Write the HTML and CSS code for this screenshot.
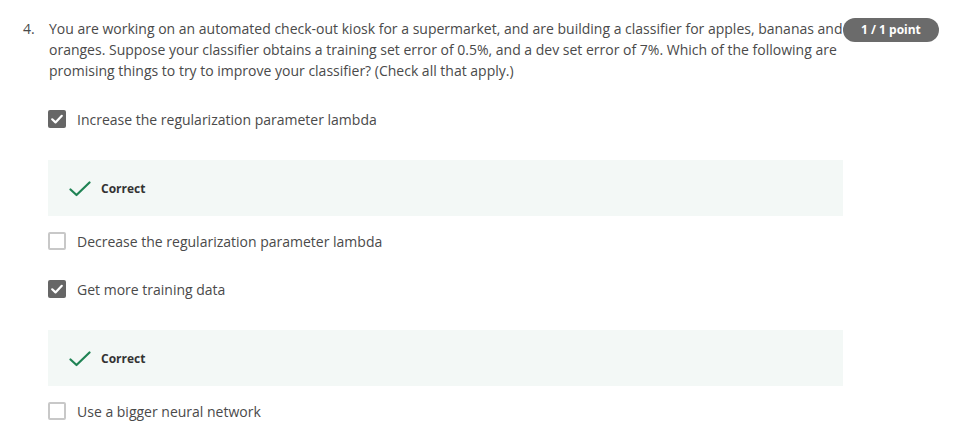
FILE: index.html
```html
<!DOCTYPE html>
<html>
<head>
<meta charset="utf-8">
<link rel="stylesheet" href="styles.css">
</head>
<body>
<div class="question">
  <div class="q-head">
    <div class="q-num">4.</div>
    <div class="q-text">You are working on an automated check-out kiosk for a supermarket, and are building a classifier for apples, bananas and oranges. Suppose your classifier obtains a training set error of 0.5%, and a dev set error of 7%. Which of the following are promising things to try to improve your classifier? (Check all that apply.)</div>
    <div class="badge">1 / 1 point</div>
  </div>
  <div class="options">
    <div class="option first">
      <div class="row">
        <span class="box checked"><svg width="18" height="18" viewBox="0 0 18 18"><path d="M4.2 9.3 L7.5 12.4 L13.8 5.8" fill="none" stroke="#fff" stroke-width="2.2" stroke-linecap="round" stroke-linejoin="round"/></svg></span>
        <span class="label">Increase the regularization parameter lambda</span>
      </div>
      <div class="feedback">
        <svg class="tick" width="22" height="16" viewBox="0 0 22 16"><path d="M1.5 8.5 L7.5 14 L20.5 1.5" fill="none" stroke="#1f8354" stroke-width="2.2" stroke-linecap="round" stroke-linejoin="round"/></svg>
        <span class="fb-text">Correct</span>
      </div>
    </div>
    <div class="option after-fb">
      <div class="row">
        <span class="box"></span>
        <span class="label">Decrease the regularization parameter lambda</span>
      </div>
    </div>
    <div class="option">
      <div class="row">
        <span class="box checked"><svg width="18" height="18" viewBox="0 0 18 18"><path d="M4.2 9.3 L7.5 12.4 L13.8 5.8" fill="none" stroke="#fff" stroke-width="2.2" stroke-linecap="round" stroke-linejoin="round"/></svg></span>
        <span class="label">Get more training data</span>
      </div>
      <div class="feedback">
        <svg class="tick" width="22" height="16" viewBox="0 0 22 16"><path d="M1.5 8.5 L7.5 14 L20.5 1.5" fill="none" stroke="#1f8354" stroke-width="2.2" stroke-linecap="round" stroke-linejoin="round"/></svg>
        <span class="fb-text">Correct</span>
      </div>
    </div>
    <div class="option after-fb">
      <div class="row">
        <span class="box"></span>
        <span class="label">Use a bigger neural network</span>
      </div>
    </div>
  </div>
</div>
</body>
</html>
```

FILE: styles.css
```css
html, body {
  margin: 0;
  padding: 0;
  background: #fff;
}
body {
  font-family: "Open Sans", "Liberation Sans", sans-serif;
  color: #4a4a4a;
  font-size: 14px;
  line-height: 21px;
}
.question {
  padding: 18px 0 0 23px;
  width: 916px;
}
.q-head {
  display: flex;
  align-items: flex-start;
}
.q-num {
  width: 26px;
  flex: none;
}
.q-text {
  width: 794px;
  flex: none;
}
.badge {
  flex: none;
  margin-top: 0;
  height: 24px;
  line-height: 24px;
  padding: 0 18px;
  border-radius: 12px;
  background: #6b6b6b;
  color: #fff;
  font-weight: 700;
  font-size: 12px;
  white-space: nowrap;
}
.options {
  margin-left: 25px;
  margin-top: 26px;
}
.option + .option {
  margin-top: 24px;
}
.option.after-fb {
  margin-top: 13px;
}
.row {
  display: flex;
  align-items: center;
  height: 24px;
}
.box {
  width: 18px;
  height: 18px;
  box-sizing: border-box;
  border: 2px solid #c8c8c8;
  border-radius: 2px;
  background: #fff;
  margin-right: 11px;
  flex: none;
}
.box.checked {
  border: none;
  background: #666;
}
.box svg {
  display: block;
}
.label {
  color: #4a4a4a;
}
.feedback {
  margin-top: 29px;
  width: 795px;
  height: 56px;
  box-sizing: border-box;
  background: #f3f8f6;
  display: flex;
  align-items: center;
  padding-left: 21px;
}
.tick {
  display: block;
  margin-right: 10px;
  margin-top: 1px;
}
.fb-text {
  font-weight: 700;
  font-size: 12px;
  color: #333;
}
```
